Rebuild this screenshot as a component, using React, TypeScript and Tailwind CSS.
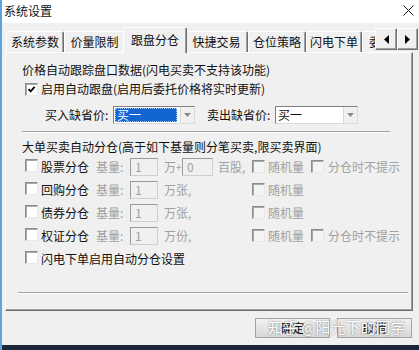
import React from "react";

function Cb({ checked = false, disabled = false }: { checked?: boolean; disabled?: boolean }) {
  return (
    <span
      className={
        "relative inline-flex items-center justify-center w-[13px] h-[13px] shrink-0 border border-t-[#8c8c8c] border-l-[#8c8c8c] border-r-[#e8e8e8] border-b-[#e8e8e8] shadow-[inset_1px_1px_0_#a8a8a8] " +
        (disabled ? "bg-[#f4f4f4]" : "bg-white")
      }
    >
      {checked && (
        <svg width="9" height="9" viewBox="0 0 9 9">
          <path d="M1.5 4.2 L3.6 6.4 L7.6 1.8" stroke="#000" strokeWidth="1.8" fill="none" />
        </svg>
      )}
    </span>
  );
}

function Field({ w, v }: { w: string; v: string }) {
  return (
    <div
      className={
        "h-[18px] shrink-0 border border-t-[#9a9a9a] border-l-[#9a9a9a] border-r-[#cfcfcf] border-b-[#cfcfcf] bg-[#f0f0f0] pl-[4px] text-[#a0a0a0] flex items-center " +
        w
      }
    >
      {v}
    </div>
  );
}

function Combo({ w, highlighted = false }: { w: string; highlighted?: boolean }) {
  return (
    <div
      className={
        "h-[18px] shrink-0 flex items-center border border-t-[#7f7f7f] border-l-[#7f7f7f] border-r-[#d9d9d9] border-b-[#d9d9d9] bg-white " +
        w
      }
    >
      {highlighted ? (
        <span className="ml-[1px] w-[62px] h-[14px] bg-[#1266d4] text-white flex items-center pl-[2px] outline outline-1 outline-dotted outline-[#9cc4f5] -outline-offset-1">
          买一
        </span>
      ) : (
        <span className="ml-[2px] text-[#111]">买一</span>
      )}
      <span className="ml-auto w-[14px] h-[16px] bg-[#f0f0f0] border-l border-[#dadada] flex items-center justify-center">
        <svg width="7" height="4" viewBox="0 0 7 4">
          <path d="M0 0 L7 0 L3.5 4 Z" fill="#8a8a8a" />
        </svg>
      </span>
    </div>
  );
}

function Tab({ label, w, selected = false }: { label: string; w: string; selected?: boolean }) {
  if (selected) {
    return (
      <div
        className={
          "relative z-10 -mx-[2px] -mb-[1px] h-[26px] shrink-0 bg-[#f0f0f0] border-t border-l border-white border-r border-r-[#6e6e6e] shadow-[inset_-1px_0_0_#a0a0a0] rounded-t-[2px] flex items-center justify-center pb-[2px] " +
          w
        }
      >
        {label}
      </div>
    );
  }
  return (
    <div
      className={
        "h-[21px] shrink-0 bg-[#f0f0f0] border-t border-l border-white border-r border-r-[#6e6e6e] shadow-[inset_-1px_0_0_#a0a0a0] rounded-t-[2px] flex items-center justify-center " +
        w
      }
    >
      {label}
    </div>
  );
}

function ArrowBtn({ dir, w }: { dir: "l" | "r"; w: string }) {
  return (
    <div
      className={
        "self-start mt-[1px] h-[22px] shrink-0 bg-[#f0f0f0] border border-t-white border-l-white border-r-[#6e6e6e] border-b-[#6e6e6e] shadow-[inset_-1px_-1px_0_#a0a0a0] flex items-center justify-center " +
        w
      }
    >
      <svg width="5" height="9" viewBox="0 0 5 9">
        {dir === "l" ? <path d="M5 0 L0 4.5 L5 9 Z" fill="#000" /> : <path d="M0 0 L5 4.5 L0 9 Z" fill="#000" />}
      </svg>
    </div>
  );
}

const gray = "text-[#a0a0a0]";

function SplitRow({
  name,
  unit,
  first = false,
  noPrompt = false,
  enabledBox = false,
}: {
  name: string;
  unit: string;
  first?: boolean;
  noPrompt?: boolean;
  enabledBox?: boolean;
}) {
  return (
    <div className="h-[23px] flex items-center whitespace-nowrap">
      <div className="w-[74px] flex items-center shrink-0">
        <span className="ml-[3px]">
          <Cb disabled={!enabledBox} />
        </span>
        <span className="ml-[3px]">{name}</span>
      </div>
      <span className={"w-[34px] shrink-0 " + gray}>基量:</span>
      <Field w="w-[28px]" v="1" />
      <span className="w-[6px] shrink-0" />
      {first ? (
        <>
          <span className={"w-[12px] shrink-0 " + gray}>万</span>
          <span className={"w-[6px] shrink-0 text-[10px] " + gray}>+</span>
          <Field w="w-[31px]" v="0" />
          <span className={"w-[39px] shrink-0 pl-[5px] " + gray}>百股,</span>
        </>
      ) : (
        <span className={"w-[88px] shrink-0 " + gray}>{unit}</span>
      )}
      <Cb disabled />
      <span className={"ml-[3px] w-[43px] shrink-0 " + gray}>随机量</span>
      {noPrompt && (
        <>
          <Cb disabled />
          <span className={"ml-[4px] " + gray}>分仓时不提示</span>
        </>
      )}
    </div>
  );
}

export default function App() {
  return (
    <div className="relative w-[419px] h-[350px] overflow-hidden bg-[#f0f0f0] border-l-2 border-[#5aa5e0] font-['Noto_Sans_CJK_SC',sans-serif] text-[12px] leading-[16px] text-[#111] flex flex-col">
      {/* title bar */}
      <div className="h-[23px] shrink-0 bg-white flex items-center justify-between pl-[2px] pr-[5px]">
        <span className="pb-[1px]">系统设置</span>
        <svg width="11" height="11" viewBox="0 0 11 11" className="mb-[2px]">
          <path d="M0.5 0.5 L10.5 10.5 M10.5 0.5 L0.5 10.5" stroke="#222" strokeWidth="1" />
        </svg>
      </div>

      {/* tab strip */}
      <div className="h-[29px] shrink-0 pt-[4px] pl-[4px] flex items-end whitespace-nowrap">
        <Tab label="系统参数" w="w-[58px]" />
        <Tab label="价量限制" w="w-[61px]" />
        <Tab label="跟盘分仓" w="w-[64px]" selected />
        <Tab label="快捷交易" w="w-[63px]" />
        <Tab label="仓位策略" w="w-[58px]" />
        <Tab label="闪电下单" w="w-[56px]" />
        <div className="h-[21px] w-[13px] shrink-0 overflow-hidden bg-[#f0f0f0] border-t border-l border-white flex items-center pl-[6px]">
          委托
        </div>
        <ArrowBtn dir="l" w="w-[22px]" />
        <ArrowBtn dir="r" w="w-[21px]" />
      </div>

      {/* tab panel */}
      <div className="ml-[3px] w-[408px] h-[259px] shrink-0 border-t border-l border-white border-r border-b border-r-[#6e6e6e] border-b-[#6e6e6e] shadow-[inset_-1px_-1px_0_#a0a0a0] flex flex-col pl-[16px] whitespace-nowrap">
        <div className="mt-[9px] h-[16px] flex items-center">价格自动跟踪盘口数据(闪电买卖不支持该功能)</div>
        <div className="mt-[2px] h-[18px] flex items-center">
          <span className="ml-[3px]">
            <Cb checked />
          </span>
          <span className="ml-[3px]">启用自动跟盘(启用后委托价格将实时更新)</span>
        </div>
        <div className="mt-[8px] h-[18px] flex items-center pl-[23px]">
          <span className="w-[68px] shrink-0">买入缺省价:</span>
          <Combo w="w-[82px]" highlighted />
          <span className="ml-[12px] w-[68px] shrink-0">卖出缺省价:</span>
          <Combo w="w-[83px]" />
        </div>
        <div className="mt-[7px] w-[368px] h-[2px] border-t border-[#a0a0a0] border-b border-b-white" />
        <div className="mt-[6px] h-[16px] flex items-center">大单买卖自动分仓(高于如下基量则分笔买卖,限买卖界面)</div>
        <SplitRow name="股票分仓" unit="" first noPrompt enabledBox />
        <SplitRow name="回购分仓" unit="万张," enabledBox />
        <SplitRow name="债券分仓" unit="万张," enabledBox />
        <SplitRow name="权证分仓" unit="万份," noPrompt enabledBox />
        <div className="h-[23px] flex items-center">
          <span className="ml-[3px]">
            <Cb />
          </span>
          <span className="ml-[3px]">闪电下单启用自动分仓设置</span>
        </div>
        <div className="mt-[22px] -ml-[4px] w-[390px] h-[2px] border-t border-[#a0a0a0] border-b border-b-white" />
      </div>

      {/* buttons */}
      <div className="mt-[7px] h-[20px] shrink-0 flex justify-end gap-[7px] pr-[7px]">
        <button className="w-[75px] h-[20px] border border-[#a3a3a3] bg-gradient-to-b from-[#f3f3f3] to-[#d6d6d6] text-[12px] text-[#111] flex items-center justify-center">
          确定
        </button>
        <button className="w-[75px] h-[20px] border border-[#a3a3a3] bg-gradient-to-b from-[#f3f3f3] to-[#d6d6d6] text-[12px] text-[#111] flex items-center justify-center">
          取消
        </button>
      </div>

      {/* taskbar strip */}
      <div className="mt-auto h-[5px] shrink-0 bg-[#1c2839]" />

      {/* watermark */}
      <div className="absolute left-[266px] top-[318px] text-[15px] leading-[18px] text-white [text-shadow:0_0_2px_rgba(0,0,0,0.55)] whitespace-nowrap pointer-events-none">
        知乎 @阳光下的同学
      </div>
    </div>
  );
}
